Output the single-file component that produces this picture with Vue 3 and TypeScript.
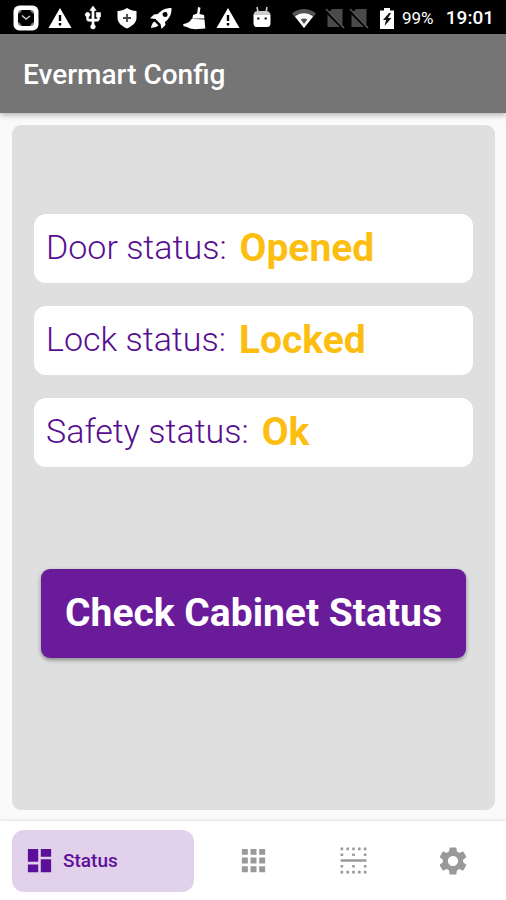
<script setup lang="ts">
import { ref } from 'vue'

interface StatusRow {
  label: string
  value: string
}

const rows = ref<StatusRow[]>([
  { label: 'Door status:', value: 'Opened' },
  { label: 'Lock status:', value: 'Locked' },
  { label: 'Safety status:', value: 'Ok' },
])

const tabs = ['Status', 'Grid', 'Rows', 'Settings']
const active = ref<string>('Status')
</script>

<template>
  <div class="screen">
    <div class="system-bar">
      <div class="notices">
        <svg viewBox="0 0 26 26" aria-hidden="true">
          <rect x="0.500" y="0.500" width="25" height="25" rx="6" fill="#fff" />
          <rect x="5" y="5" width="16" height="16" rx="3.500" fill="#777" />
          <path fill="#000" d="M9 5h8l1.500 2.500L21 9v8l-2.500 1.500L17 21H9l-1.500-2.500L5 17V9l2.500-1.500Z" />
          <path d="M9 10.500l4 3.500 4-3" fill="none" stroke="#ccc" stroke-width="1.500" />
        </svg>
        <svg viewBox="0 0 26 26" aria-hidden="true">
          <path fill="#fff" fill-rule="evenodd" d="M13 3L24.500 23H1.500ZM11.800 10v6h2.400v-6ZM11.800 18v2.400h2.400V18Z" />
        </svg>
        <svg viewBox="0 0 24 24" aria-hidden="true">
          <path fill="#fff" stroke="#fff" stroke-width=".5" d="M15 7v4h1v2h-3V5h2l-3-4-3 4h2v8H8v-2.070c.7-.37 1.200-1.080 1.200-1.930 0-1.210-.99-2.200-2.200-2.200S4.800 7.790 4.800 9c0 .85.5 1.560 1.200 1.930V13c0 1.110.89 2 2 2h3v3.050c-.71.37-1.200 1.100-1.200 1.950a2.200 2.200 0 0 0 4.400 0c0-.85-.49-1.580-1.200-1.950V15h3c1.110 0 2-.89 2-2v-2h1V7h-4z" />
        </svg>
        <svg viewBox="0 0 26 26" aria-hidden="true">
          <path fill="#fff" d="M13 3c3 2 6 3 9.500 3v7c0 5-5 8.500-9.500 10.500C8.500 21.500 3.500 18 3.500 13V6C7 6 10 5 13 3Z" />
          <path d="M13 9v8M9 13h8" stroke="#444" stroke-width="1.800" />
        </svg>
        <svg viewBox="0 0 26 26" aria-hidden="true">
          <path fill="#fff" fill-rule="evenodd" d="M23.500 3c.3 6-2 10.500-6.500 14l.5 3-4 4-1-5-5-5-5.500-.8L6 9.500l4-.5C13.500 5 17.500 3 23.500 3ZM17 7a2.500 2.500 0 1 0 .1 5A2.500 2.500 0 0 0 17 7Z" />
          <path fill="#fff" d="M6.500 16.500l4 4C8.500 22 6 22.500 3 23c.3-2.500 1-5 3.500-6.500Z" />
        </svg>
        <svg viewBox="0 0 26 26" aria-hidden="true">
          <path fill="#fff" d="M16 2l2.500.8-1 6.200 4.500 1 .5 3.500-12-.5.500-3 4.200-1.500ZM10 13.500l12.500 1 .8 9-10.300.8-5-.8-2-1-4.500-1.500-.3-2C6 18.500 8 16.500 10 13.500Z" />
          <path d="M10 13.400l12 .8" stroke="#aaa" stroke-width="1" />
        </svg>
        <svg viewBox="0 0 26 26" aria-hidden="true">
          <path fill="#fff" fill-rule="evenodd" d="M13 3L24.500 23H1.500ZM11.800 10v6h2.400v-6ZM11.800 18v2.400h2.400V18Z" />
        </svg>
        <svg viewBox="0 0 26 26" aria-hidden="true">
          <path d="M8 2l1 5M18 2l-1 5" stroke="#ccc" stroke-width="1.600" />
          <path fill="#ccc" d="M4.500 10.500c0-3 2-4.500 4-4.500h9c2 0 4 1.500 4 4.500Z" />
          <path fill="#fff" d="M4.500 10h17v8c0 2.500-1 4-3.500 4H8c-2.500 0-3.500-1.500-3.500-4Z" />
          <circle cx="9.300" cy="13.500" r="1.200" fill="#222" />
          <circle cx="16.700" cy="13.500" r="1.200" fill="#222" />
        </svg>
      </div>
      <div class="signals">
        <svg class="wifi" viewBox="0 0 26 26" aria-hidden="true">
          <path fill="#555" d="M1 8.500C8 2.500 18 2.500 25 8.500L13 23Z" />
          <path fill="#fff" d="M4 11.500c5-4.500 13-4.500 18 0L13 23Z" />
          <path fill="#555" d="M9.500 14.500c2-1.300 5-1.300 7 0L13 19Z" />
        </svg>
        <svg v-for="n in 2" :key="n" viewBox="0 0 24 26" aria-hidden="true">
          <path fill="#4a4a4a" d="M9 4h10.500v18H4.500V8.500Z" />
          <path d="M2 5l19 19" stroke="#000" stroke-width="3" />
          <path d="M3 4l18 19" stroke="#555" stroke-width="1.600" />
        </svg>
        <svg class="battery" viewBox="0 0 24 26" aria-hidden="true">
          <path fill="#fff" d="M9 3h6v2.500h4V24H5V5.500h4Z" />
          <path fill="#111" d="M14 8l-6 7h3l-1.500 6 7-8h-3.500l3-5Z" />
        </svg>
      </div>
      <span class="percent">99%</span>
      <time class="clock">19:01</time>
    </div>

    <header class="app-bar">
      <h1>Evermart Config</h1>
    </header>

    <main class="content">
      <section class="panel">
        <dl class="rows">
          <div v-for="row in rows" :key="row.label" class="row">
            <dt>{{ row.label }}</dt>
            <dd>{{ row.value }}</dd>
          </div>
        </dl>
        <button type="button" class="check">Check Cabinet Status</button>
      </section>
    </main>

    <nav class="tabs">
      <button
        v-for="tab in tabs"
        :key="tab"
        type="button"
        class="tab"
        :class="{ active: tab === active }"
        :aria-label="tab"
        @click="active = tab"
      >
        <svg v-if="tab === 'Status'" viewBox="0 0 24 24" aria-hidden="true">
          <path d="M3 13h8V3H3v10zm0 8h8v-6H3v6zm10 0h8V11h-8v10zm0-18v6h8V3h-8z" />
        </svg>
        <svg v-else-if="tab === 'Grid'" viewBox="0 0 24 24" aria-hidden="true">
          <path d="M3 3h4.600v4.600H3zM9.700 3h4.600v4.600H9.700zM16.400 3h4.600v4.600h-4.600zM3 9.700h4.600v4.600H3zM9.700 9.700h4.600v4.600H9.700zM16.400 9.700h4.600v4.600h-4.600zM3 16.400h4.600v4.600H3zM9.700 16.400h4.600v4.600H9.700zM16.400 16.400h4.600v4.600h-4.600z" />
        </svg>
        <svg v-else-if="tab === 'Rows'" viewBox="0 0 24 24" aria-hidden="true">
          <path d="M2 2h2v2H2zM6.500 2h2v2h-2zM11 2h2v2h-2zM15.500 2h2v2h-2zM20 2h2v2h-2zM2 6.500h2v2H2zM11 6.500h2v2h-2zM20 6.500h2v2h-2zM2 11h20v2H2zM2 15.500h2v2H2zM11 15.500h2v2h-2zM20 15.500h2v2h-2zM2 20h2v2H2zM6.500 20h2v2h-2zM11 20h2v2h-2zM15.500 20h2v2h-2zM20 20h2v2h-2z" />
        </svg>
        <svg v-else class="gear" viewBox="0 0 24 24" aria-hidden="true">
          <path d="M19.140 12.940c.04-.3.06-.61.06-.94 0-.32-.02-.64-.07-.94l2.030-1.580c.18-.14.23-.41.12-.61l-1.920-3.320c-.12-.22-.37-.29-.59-.22l-2.390.96c-.5-.38-1.030-.7-1.620-.94l-.36-2.540c-.04-.24-.24-.41-.48-.41h-3.840c-.24 0-.43.17-.47.41l-.36 2.540c-.59.24-1.130.57-1.620.94l-2.390-.96c-.22-.08-.47 0-.59.22L2.740 8.870c-.12.21-.08.47.12.61l2.030 1.580c-.05.3-.09.63-.09.94s.02.64.07.94l-2.030 1.580c-.18.14-.23.41-.12.61l1.920 3.320c.12.22.37.29.59.22l2.390-.96c.5.38 1.030.7 1.620.94l.36 2.540c.05.24.24.41.48.41h3.840c.24 0 .44-.17.47-.41l.36-2.540c.59-.24 1.130-.56 1.620-.94l2.390.96c.22.08.47 0 .59-.22l1.920-3.320c.12-.22.07-.47-.12-.61l-2.010-1.580zM12 15.600c-1.980 0-3.600-1.620-3.600-3.600s1.620-3.600 3.600-3.600 3.600 1.620 3.600 3.600-1.620 3.600-3.600 3.600z" />
        </svg>
        <span v-if="tab === active">{{ tab }}</span>
      </button>
    </nav>
  </div>
</template>

<style>
body {
  margin: 0;
}
</style>

<style scoped>
.screen {
  display: flex;
  flex-direction: column;
  min-height: 100vh;
  background: #fafafa;
  font-family: Roboto, "Liberation Sans", sans-serif;
}

.system-bar {
  display: flex;
  align-items: center;
  height: 34px;
  padding: 1px 12px 0 13px;
  box-sizing: border-box;
  background: #000;
  color: #fff;
}

.notices {
  display: flex;
  justify-content: space-between;
  flex: 0 1 262px;
}

.notices svg {
  width: 26px;
  height: 26px;
}

.signals {
  display: flex;
  margin-left: 16px;
}

.signals svg {
  width: 24px;
  height: 26px;
}

.signals .wifi {
  width: 26px;
  margin-right: 6px;
}

.signals .battery {
  margin-left: 4px;
}

.percent {
  margin-left: 3px;
  font-size: 17px;
  line-height: 24px;
}

.clock {
  margin-left: auto;
  font-size: 19px;
  font-weight: 500;
  line-height: 24px;
}

.app-bar {
  position: relative;
  display: flex;
  align-items: center;
  height: 79px;
  padding: 2px 23px 0;
  box-sizing: border-box;
  background: #757575;
  color: #fff;
  box-shadow: 0 2px 6px rgba(0, 0, 0, 0.3);
}

.app-bar h1 {
  margin: 0;
  font-size: 28px;
  font-weight: 500;
  line-height: 32px;
}

.content {
  display: flex;
  flex: 1;
  padding: 12px 11px 11px 12px;
}

.panel {
  display: flex;
  flex: 1;
  flex-direction: column;
  align-items: center;
  justify-content: center;
  gap: 102px;
  padding: 0 22px;
  border-radius: 9px;
  background: #dfdfdf;
}

.rows {
  display: flex;
  flex-direction: column;
  align-self: stretch;
  gap: 23px;
  margin: 0;
}

.row {
  display: flex;
  align-items: center;
  gap: 13px;
  height: 69px;
  padding: 0 12px;
  border-radius: 12px;
  background: #fff;
}

.row dt {
  padding-bottom: 2px;
  color: #560e91;
  font-size: 34px;
  font-weight: 300;
}

.row dd {
  margin: 0;
  color: #fdbe12;
  font-size: 39px;
  font-weight: 700;
}

.check {
  height: 89px;
  margin-bottom: 64px;
  padding: 0 24px;
  border: 0;
  border-radius: 9px;
  background: #6a1b9a;
  box-shadow: 0 2px 4px rgba(0, 0, 0, 0.4);
  color: #fff;
  font-family: inherit;
  font-size: 39px;
  font-weight: 700;
}

.tabs {
  display: grid;
  grid-template-columns: 191fr 100fr 100fr 100fr;
  align-items: center;
  height: 79px;
  padding: 0 3px 0 12px;
  background: #fff;
  box-shadow: 0 -1px 3px rgba(0, 0, 0, 0.1);
}

.tab {
  display: flex;
  align-items: center;
  justify-content: center;
  height: 62px;
  padding: 0;
  border: 0;
  border-radius: 12px;
  background: transparent;
  color: #999;
  font-family: inherit;
}

.tab svg {
  width: 31px;
  height: 31px;
  fill: currentColor;
}

.tab .gear {
  width: 34px;
  height: 34px;
}

.tab.active {
  justify-content: flex-start;
  gap: 8px;
  margin-right: 9px;
  padding: 0 12px;
  background: #e1d1eb;
  color: #5c0f98;
  font-size: 19px;
  font-weight: 500;
}
</style>
